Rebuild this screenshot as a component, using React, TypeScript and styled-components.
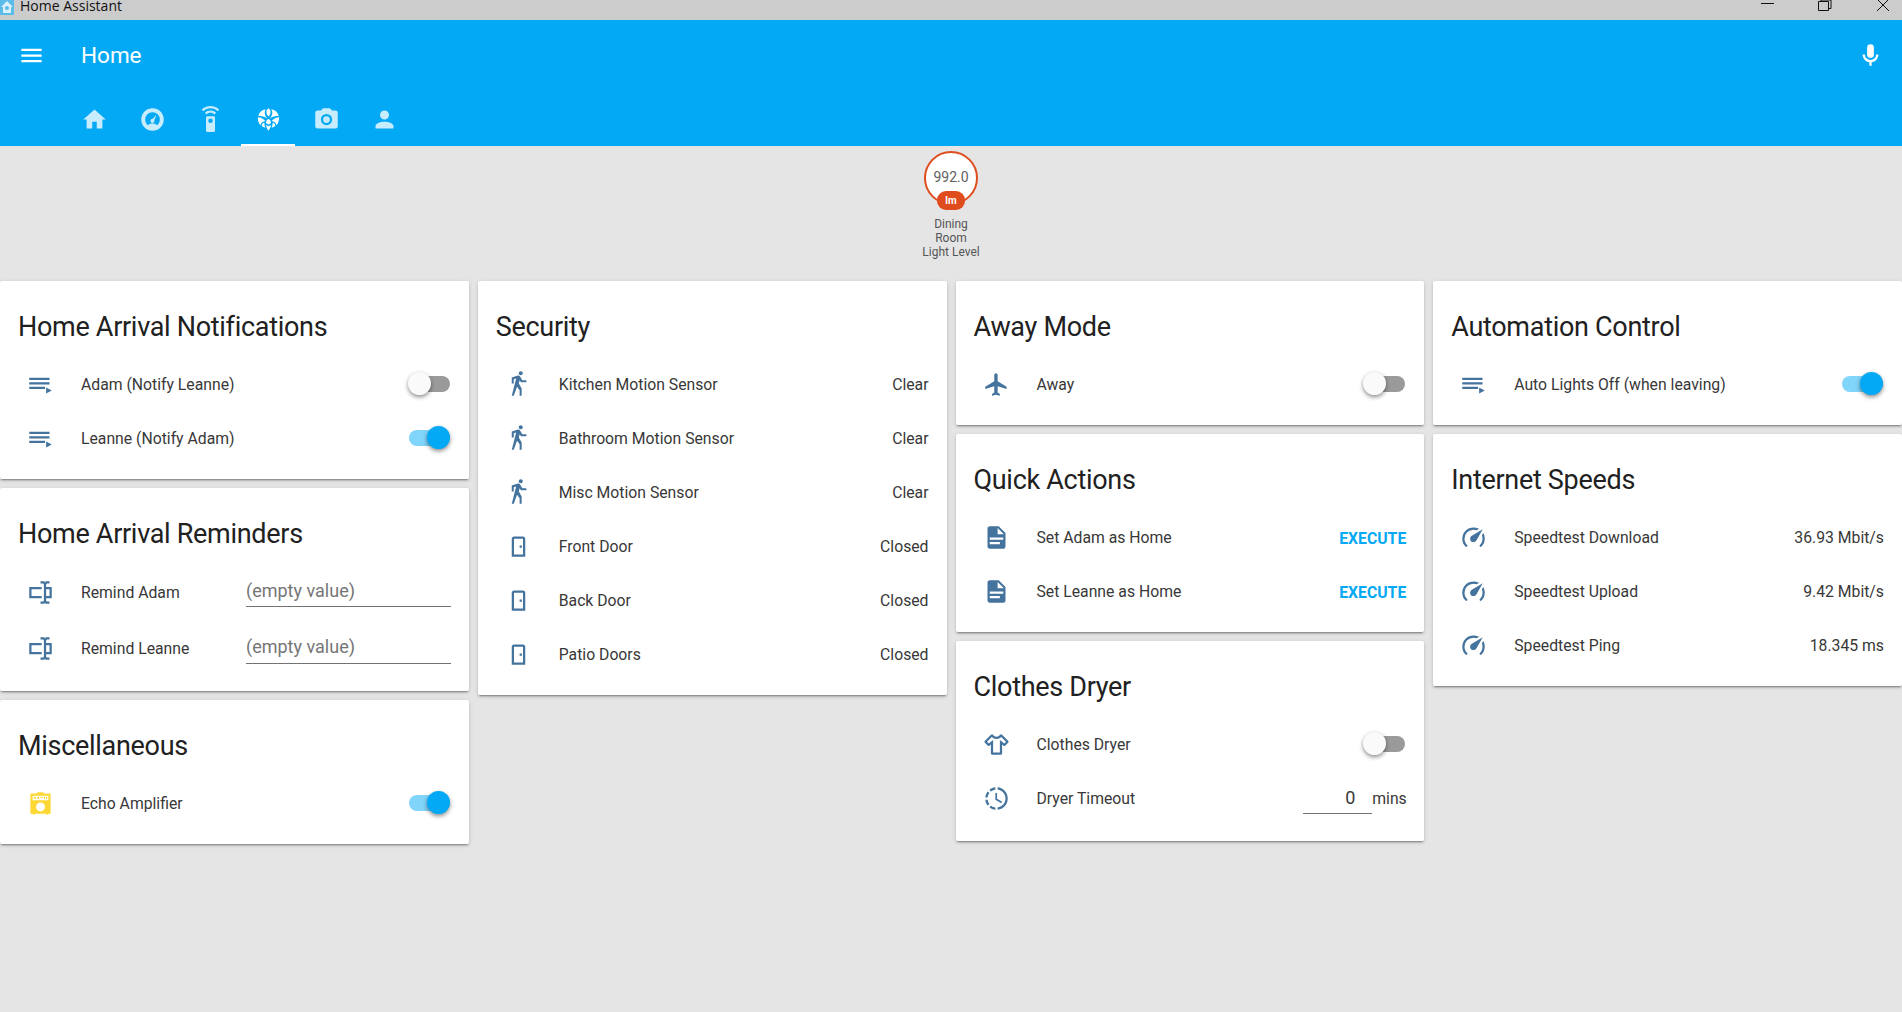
import { ReactNode } from "react";
import styled, { createGlobalStyle } from "styled-components";

const GlobalStyle = createGlobalStyle`
  html, body {
    margin: 0;
    padding: 0;
    height: 100%;
    background-color: #e5e5e5;
    overflow: hidden;
  }
  * {
    box-sizing: border-box;
  }
  input {
    font-family: Roboto, sans-serif;
  }
`;

const icons = {
  menu: "M3,6H21V8H3V6M3,11H21V13H3V11M3,16H21V18H3V16Z",
  mic: "M12,2A3,3 0 0,1 15,5V11A3,3 0 0,1 12,14A3,3 0 0,1 9,11V5A3,3 0 0,1 12,2M19,11C19,14.53 16.39,17.44 13,17.93V21H11V17.93C7.61,17.44 5,14.53 5,11H7A5,5 0 0,0 12,16A5,5 0 0,0 17,11H19Z",
  home: "M10,20V14H14V20H19V12H22L12,3L2,12H5V20H10Z",
  gauge:
    "M12,2A10,10 0 0,1 22,12A10,10 0 0,1 12,22A10,10 0 0,1 2,12A10,10 0 0,1 12,2M12,5.5A6.5,6.5 0 0,0 5.5,12C5.5,14 6.4,15.8 7.8,17C8.8,16 10.3,15.5 12,15.5C13.7,15.5 15.2,16 16.2,17C17.6,15.8 18.5,14 18.5,12A6.5,6.5 0 0,0 12,5.5M15.6,7.8L13.6,12.6C14,13.6 13.4,14.8 12.3,15C11.1,15.2 10.1,14.3 10.2,13.1C10.3,12 11.2,11.3 12.2,11.4L15.6,7.8Z",
  remote:
    "M12,0C8.96,0 6.21,1.23 4.22,3.22L5.63,4.63C7.26,3 9.5,2 12,2C14.5,2 16.74,3 18.36,4.64L19.77,3.23C17.79,1.23 15.04,0 12,0M7.05,6.05L8.46,7.46C9.37,6.56 10.62,6 12,6C13.38,6 14.63,6.56 15.54,7.46L16.95,6.05C15.68,4.78 13.93,4 12,4C10.07,4 8.32,4.78 7.05,6.05M12,15A2,2 0 0,1 10,13A2,2 0 0,1 12,11A2,2 0 0,1 14,13A2,2 0 0,1 12,15M15,9H9A1,1 0 0,0 8,10V22A1,1 0 0,0 9,23H15A1,1 0 0,0 16,22V10A1,1 0 0,0 15,9Z",
  hops:
    "M12,2C10,3.5 9.2,6 12,9.4C14.8,6 14,3.5 12,2M9.5,2.9C6.3,3.4 3.9,5.3 2.9,8.6C5.8,8.6 8.7,9.2 11,11.4C8.4,8.4 7.9,5.4 9.5,2.9M14.5,2.9C16.1,5.4 15.6,8.4 13,11.4C15.3,9.2 18.2,8.6 21.1,8.6C20.1,5.3 17.7,3.4 14.5,2.9M2.6,10C2.4,12.8 3.2,15 4.8,17C5.4,15 7,13.8 9.2,13.4C7.4,11.3 5.2,10.2 2.6,10M21.4,10C18.8,10.2 16.6,11.3 14.8,13.4C17,13.8 18.6,15 19.2,17C20.8,15 21.6,12.8 21.4,10M12,11.4C10.5,12.4 9.8,13.6 9.7,15C10.6,15.4 11.3,15.9 12,16.6C12.7,15.9 13.4,15.4 14.3,15C14.2,13.6 13.5,12.4 12,11.4M8.2,14.6C6.9,15 6.1,16 5.9,17.6C6.8,18.4 7.9,19 9.2,19.4C8.6,17.8 8.3,16.2 8.2,14.6M15.8,14.6C15.7,16.2 15.4,17.8 14.8,19.4C16.1,19 17.2,18.4 18.1,17.6C17.9,16 17.1,15 15.8,14.6M12,18.2C11.2,17.4 10.5,17 9.8,16.9C10,18.6 10.7,20.2 12,22C13.3,20.2 14,18.6 14.2,16.9C13.5,17 12.8,17.4 12,18.2Z",
  camera:
    "M4,4H7L9,2H15L17,4H20A2,2 0 0,1 22,6V18A2,2 0 0,1 20,20H4A2,2 0 0,1 2,18V6A2,2 0 0,1 4,4M12,7A5,5 0 0,0 7,12A5,5 0 0,0 12,17A5,5 0 0,0 17,12A5,5 0 0,0 12,7M12,9A3,3 0 0,1 15,12A3,3 0 0,1 12,15A3,3 0 0,1 9,12A3,3 0 0,1 12,9Z",
  account:
    "M12,4A4,4 0 0,1 16,8A4,4 0 0,1 12,12A4,4 0 0,1 8,8A4,4 0 0,1 12,4M12,14C16.42,14 20,15.79 20,18V20H4V18C4,15.79 7.58,14 12,14Z",
  playlist: "M2,6H20V8H2V6M2,10H20V12H2V10M2,14H16V16H2V14M17,14.6V20L22,17.3L17,14.6Z",
  textbox:
    "M17,7H22V17H17V19A1,1 0 0,0 18,20H20V22H17.5C16.95,22 16,21.55 16,21C16,21.55 15.05,22 14.5,22H12V20H14A1,1 0 0,0 15,19V5A1,1 0 0,0 14,4H12V2H14.5C15.05,2 16,2.45 16,3C16,2.45 16.95,2 17.5,2H20V4H18A1,1 0 0,0 17,5V7M2,7H13V9H4V15H13V17H2V7M20,15V9H17V15H20Z",
  amplifier:
    "M10,2H14A1,1 0 0,1 15,3H21V21H19A1,1 0 0,1 18,22A1,1 0 0,1 17,21H7A1,1 0 0,1 6,22A1,1 0 0,1 5,21H3V3H9A1,1 0 0,1 10,2M5,5V9H19V5H5M7,6A1,1 0 0,1 8,7A1,1 0 0,1 7,8A1,1 0 0,1 6,7A1,1 0 0,1 7,6M12,6H14V7H12V6M15,6H16V8H15V6M17,6H18V8H17V6M12,11A4,4 0 0,0 8,15A4,4 0 0,0 12,19A4,4 0 0,0 16,15A4,4 0 0,0 12,11M10,6A1,1 0 0,1 11,7A1,1 0 0,1 10,8A1,1 0 0,1 9,7A1,1 0 0,1 10,6Z",
  walk: "M14.12,10H19V8.2H15.38L13.38,4.87C13.08,4.37 12.54,4.03 11.92,4.03C11.74,4.03 11.58,4.06 11.42,4.11L6,5.8V11H7.8V7.33L9.91,6.67L6,22H7.8L10.67,13.89L13,17V22H14.8V15.59L12.31,11.05L13.04,8.18M14,3.8C15,3.8 15.8,3 15.8,2C15.8,1 15,0.2 14,0.2C13,0.2 12.2,1 12.2,2C12.2,3 13,3.8 14,3.8Z",
  door: "M8,3C6.89,3 6,3.89 6,5V21H18V5C18,3.89 17.11,3 16,3H8M8,5H16V19H8V5M13,11V13H15V11H13Z",
  airplane:
    "M21,16V14L13,9V3.5A1.5,1.5 0 0,0 11.5,2A1.5,1.5 0 0,0 10,3.5V9L2,14V16L10,13.5V19L8,20.5V22L11.5,21L15,22V20.5L13,19V13.5L21,16Z",
  file: "M13,9H18.5L13,3.5V9M6,2H14L20,8V20A2,2 0 0,1 18,22H6C4.89,22 4,21.1 4,20V4C4,2.89 4.89,2 6,2M15,18V16H6V18H15M18,14V12H6V14H18Z",
  shirt:
    "M16,21H8A1,1 0 0,1 7,20V12.1L5.7,13.1C5.3,13.5 4.7,13.5 4.3,13.1L1.5,10.3C1.1,9.9 1.1,9.3 1.5,8.9L7.3,3H9C9,4.1 10.3,5 12,5C13.7,5 15,4.1 15,3H16.7L22.5,8.9C22.9,9.3 22.9,9.9 22.5,10.3L19.7,13.1C19.3,13.5 18.7,13.5 18.3,13.1L17,12.1V20A1,1 0 0,1 16,21M20.4,9.6L16.2,5.3C15.2,6.3 13.8,7 12,7C10.2,7 8.8,6.3 7.8,5.3L3.6,9.6L5,11L9,8V19H15V8L19,11L20.4,9.6Z",
  clock:
    "M13,2.03V2.05L13,4.05C17.39,4.59 20.5,8.58 19.96,12.97C19.5,16.61 16.64,19.5 13,19.93V21.93C18.5,21.38 22.5,16.5 21.95,11C21.5,6.25 17.73,2.5 13,2.03M11,2.06C9.05,2.25 7.19,3 5.67,4.26L7.1,5.74C8.22,4.84 9.57,4.26 11,4.06V2.06M4.26,5.67C3,7.19 2.25,9.04 2.05,11H4.05C4.24,9.58 4.8,8.23 5.69,7.1L4.26,5.67M2.06,13C2.26,14.96 3.03,16.81 4.27,18.33L5.69,16.9C4.81,15.77 4.24,14.42 4.06,13H2.06M7.1,18.37L5.67,19.74C7.18,21 9.04,21.79 11,22V20C9.58,19.82 8.23,19.25 7.1,18.37M12.5,7V12.25L17,14.92L16.25,16.15L11,13V7H12.5Z",
  speed:
    "M12,16A3,3 0 0,1 9,13C9,11.88 9.61,10.9 10.5,10.39L20.21,4.77L14.68,14.35C14.18,15.33 13.17,16 12,16M12,3C13.81,3 15.5,3.5 16.97,4.32L14.87,5.53C14,5.19 13,5 12,5A8,8 0 0,0 4,13C4,15.21 4.89,17.21 6.34,18.65H6.35C6.74,19.04 6.74,19.67 6.35,20.06C5.96,20.45 5.32,20.45 4.93,20.07V20.07C3.12,18.26 2,15.76 2,13A10,10 0 0,1 12,3M22,13C22,15.76 20.88,18.26 19.07,20.07V20.07C18.68,20.45 18.05,20.45 17.66,20.06C17.27,19.67 17.27,19.04 17.66,18.65V18.65C19.11,17.2 20,15.21 20,13C20,12 19.81,11 19.46,10.1L20.67,8C21.5,9.5 22,11.18 22,13Z",
};

type IconName = keyof typeof icons;

const Svg = styled.svg<{ $color?: string }>`
  width: 27px;
  height: 27px;
  display: block;
  flex: none;
  fill: ${(p) => p.$color || "currentColor"};
`;

const Icon = ({ name, color }: { name: IconName; color?: string }) => (
  <Svg viewBox="0 0 24 24" $color={color}>
    <path d={icons[name]} />
  </Svg>
);

/* window chrome */

const TitleBar = styled.div`
  height: 20px;
  background-color: #cccccc;
  display: flex;
  overflow: hidden;
`;

const AppIcon = styled.svg`
  width: 14px;
  height: 15px;
  flex: none;
`;

const AppName = styled.div`
  flex: 1;
  margin-left: 6px;
  font-family: "Open Sans", sans-serif;
  font-size: 14px;
  line-height: 12px;
  color: #111111;
`;

const WindowButton = styled.svg<{ $gap: number }>`
  width: 14px;
  height: 12px;
  flex: none;
  margin-right: ${(p) => p.$gap}px;
  fill: none;
  stroke: #111111;
  stroke-width: 1;
`;

/* header */

const Header = styled.header`
  background-color: #03a9f4;
  color: #ffffff;
  height: 126px;
  display: flex;
  flex-direction: column;
`;

const Toolbar = styled.div`
  height: 70px;
  display: flex;
  align-items: center;
  padding: 0 18px;
  margin-bottom: 2px;
`;

const Title = styled.div`
  flex: 1;
  margin-left: 36px;
  font-family: Roboto, sans-serif;
  font-size: 22.5px;
  font-weight: 400;
`;

const Tabs = styled.div`
  height: 54px;
  display: flex;
  gap: 4px;
  padding-left: 67px;
`;

const Tab = styled.div<{ $active?: boolean }>`
  width: 54px;
  display: flex;
  align-items: center;
  justify-content: center;
  color: ${(p) => (p.$active ? "#ffffff" : "rgba(255, 255, 255, 0.78)")};
  border-bottom: 2px solid ${(p) => (p.$active ? "#ffffff" : "transparent")};
  padding-top: 2px;
`;

/* badge */

const BadgeRow = styled.div`
  height: 135px;
  padding-top: 5px;
  display: flex;
  justify-content: center;
`;

const Badge = styled.div`
  width: 54px;
  display: flex;
  flex-direction: column;
  align-items: center;
  font-family: Roboto, sans-serif;
`;

const BadgeCircle = styled.div`
  position: relative;
  width: 54px;
  height: 54px;
  flex: none;
  border-radius: 50%;
  border: 2.25px solid #df4c1e;
  background-color: #ffffff;
  display: flex;
  align-items: center;
  justify-content: center;
  padding-bottom: 3px;
  font-size: 14px;
  color: #616161;
`;

const BadgePill = styled.div`
  position: absolute;
  left: 11px;
  top: 38px;
  width: 28px;
  height: 19px;
  border-radius: 9px;
  background-color: #df4c1e;
  color: #ffffff;
  font-size: 10px;
  font-weight: 700;
  line-height: 19px;
  text-align: center;
`;

const BadgeLabel = styled.div`
  width: 60px;
  flex: none;
  margin-top: 12px;
  font-size: 12px;
  line-height: 14px;
  text-align: center;
  color: #555555;
`;

/* cards */

const Columns = styled.main`
  display: grid;
  grid-template-columns: repeat(4, minmax(0, 1fr));
  gap: 9px;
  align-items: start;
`;

const Column = styled.div`
  display: flex;
  flex-direction: column;
  gap: 9px;
`;

const CardBox = styled.section<{ $bottom?: number }>`
  background-color: #ffffff;
  border-radius: 2px;
  box-shadow: 0 2px 2px 0 rgba(0, 0, 0, 0.14), 0 1px 5px 0 rgba(0, 0, 0, 0.12),
    0 3px 1px -2px rgba(0, 0, 0, 0.2);
  padding: 0 18px ${(p) => p.$bottom ?? 14}px;
  font-family: Roboto, sans-serif;
`;

const CardTitle = styled.h2`
  margin: 0;
  padding: 28px 0 8px;
  font-size: 27px;
  line-height: 36px;
  font-weight: 400;
  letter-spacing: -0.3px;
  color: #212121;
`;

const CardBody = styled.div`
  padding-top: 4px;
`;

const Row = styled.div<{ $tall?: boolean }>`
  height: ${(p) => (p.$tall ? 56.5 : 54)}px;
  display: flex;
  align-items: center;
  font-size: 15.75px;
  color: #383838;
`;

const IconCell = styled.div`
  width: 45px;
  flex: none;
  margin-right: 18px;
  display: flex;
  justify-content: center;
`;

const Name = styled.div<{ $fixed?: boolean }>`
  flex: ${(p) => (p.$fixed ? "none" : "1")};
  width: ${(p) => (p.$fixed ? "165px" : "auto")};
  white-space: nowrap;
`;

const Value = styled.div`
  white-space: nowrap;
`;

const ActionButton = styled.div`
  font-weight: 700;
  font-size: 15.75px;
  color: #03a9f4;
  padding-top: 2px;
`;

const SwitchTrack = styled.div<{ $on?: boolean }>`
  position: relative;
  width: 41px;
  height: 16px;
  margin-right: 1px;
  border-radius: 8px;
  background-color: ${(p) => (p.$on ? "#81d4fa" : "#9a9a9a")};
`;

const SwitchThumb = styled.div<{ $on?: boolean }>`
  position: absolute;
  top: -4px;
  ${(p) => (p.$on ? "right: 0;" : "left: -1px;")}
  width: 23px;
  height: 23px;
  border-radius: 50%;
  background-color: ${(p) => (p.$on ? "#03a9f4" : "#fafafa")};
  box-shadow: 0 2px 4px rgba(0, 0, 0, 0.45);
`;

const Switch = ({ on }: { on?: boolean }) => (
  <SwitchTrack $on={on}>
    <SwitchThumb $on={on} />
  </SwitchTrack>
);

const TextField = styled.input`
  flex: 1;
  min-width: 0;
  height: 29px;
  margin-top: 1px;
  padding: 0 0 4px;
  border: none;
  border-bottom: 1.5px solid #737373;
  outline: none;
  background: transparent;
  font-size: 18px;
  color: #383838;

  &::placeholder {
    color: #757575;
    opacity: 1;
  }
`;

const NumberField = styled(TextField)`
  flex: none;
  width: 69px;
  margin-top: 2px;
  padding-right: 17px;
  padding-bottom: 3px;
  text-align: right;
  border-bottom-width: 1px;
`;

const Unit = styled.div`
  width: 34px;
  text-align: right;
`;

const Card = ({ title, bottom, children }: { title: string; bottom?: number; children: ReactNode }) => (
  <CardBox $bottom={bottom}>
    <CardTitle>{title}</CardTitle>
    <CardBody>{children}</CardBody>
  </CardBox>
);

const Entity = ({
  icon,
  color,
  name,
  children,
}: {
  icon: IconName;
  color?: string;
  name: string;
  children?: ReactNode;
}) => (
  <Row>
    <IconCell>
      <Icon name={icon} color={color || "#44739e"} />
    </IconCell>
    <Name>{name}</Name>
    {children}
  </Row>
);

const InputEntity = ({ name }: { name: string }) => (
  <Row $tall>
    <IconCell>
      <Icon name="textbox" color="#44739e" />
    </IconCell>
    <Name $fixed>{name}</Name>
    <TextField placeholder="(empty value)" readOnly />
  </Row>
);

const tabs: IconName[] = ["home", "gauge", "remote", "hops", "camera", "account"];

const security = [
  { icon: "walk", name: "Kitchen Motion Sensor", state: "Clear" },
  { icon: "walk", name: "Bathroom Motion Sensor", state: "Clear" },
  { icon: "walk", name: "Misc Motion Sensor", state: "Clear" },
  { icon: "door", name: "Front Door", state: "Closed" },
  { icon: "door", name: "Back Door", state: "Closed" },
  { icon: "door", name: "Patio Doors", state: "Closed" },
] as const;

const speeds = [
  { name: "Speedtest Download", state: "36.93 Mbit/s" },
  { name: "Speedtest Upload", state: "9.42 Mbit/s" },
  { name: "Speedtest Ping", state: "18.345 ms" },
];

const App = () => {
  return (
    <>
      <GlobalStyle />
      <TitleBar>
        <AppIcon viewBox="0 0 14 15">
          <rect width="14" height="15" fill="#5bbcea" />
          <path d="M7 1L1 7h2v6h8V7h2z" fill="#d8f1fc" />
          <circle cx="7" cy="8" r="2" fill="#5bbcea" />
        </AppIcon>
        <AppName>Home Assistant</AppName>
        <WindowButton viewBox="0 0 14 12" $gap={43}>
          <path d="M0 3.5H13" />
        </WindowButton>
        <WindowButton viewBox="0 0 14 12" $gap={44}>
          <path d="M0.5 1.5H10.5V10.5H0.5ZM3 1.5V0H13V8.5H10.5" />
        </WindowButton>
        <WindowButton viewBox="0 0 14 12" $gap={12}>
          <path d="M1 -1L13 11M13 -1L1 11" />
        </WindowButton>
      </TitleBar>
      <Header>
        <Toolbar>
          <Icon name="menu" />
          <Title>Home</Title>
          <Icon name="mic" />
        </Toolbar>
        <Tabs>
          {tabs.map((name) => (
            <Tab key={name} $active={name === "hops"}>
              <Icon name={name} />
            </Tab>
          ))}
        </Tabs>
      </Header>
      <BadgeRow>
        <Badge>
          <BadgeCircle>
            992.0
            <BadgePill>lm</BadgePill>
          </BadgeCircle>
          <BadgeLabel>Dining Room Light Level</BadgeLabel>
        </Badge>
      </BadgeRow>
      <Columns>
        <Column>
          <Card title="Home Arrival Notifications">
            <Entity icon="playlist" name="Adam (Notify Leanne)">
              <Switch />
            </Entity>
            <Entity icon="playlist" name="Leanne (Notify Adam)">
              <Switch on />
            </Entity>
          </Card>
          <Card title="Home Arrival Reminders">
            <InputEntity name="Remind Adam" />
            <InputEntity name="Remind Leanne" />
          </Card>
          <Card title="Miscellaneous">
            <Entity icon="amplifier" color="#fdd835" name="Echo Amplifier">
              <Switch on />
            </Entity>
          </Card>
        </Column>
        <Column>
          <Card title="Security">
            {security.map((item) => (
              <Entity key={item.name} icon={item.icon} name={item.name}>
                <Value>{item.state}</Value>
              </Entity>
            ))}
          </Card>
        </Column>
        <Column>
          <Card title="Away Mode">
            <Entity icon="airplane" name="Away">
              <Switch />
            </Entity>
          </Card>
          <Card title="Quick Actions">
            <Entity icon="file" name="Set Adam as Home">
              <ActionButton>EXECUTE</ActionButton>
            </Entity>
            <Entity icon="file" name="Set Leanne as Home">
              <ActionButton>EXECUTE</ActionButton>
            </Entity>
          </Card>
          <Card title="Clothes Dryer" bottom={16}>
            <Entity icon="shirt" name="Clothes Dryer">
              <Switch />
            </Entity>
            <Entity icon="clock" name="Dryer Timeout">
              <NumberField value="0" readOnly />
              <Unit>mins</Unit>
            </Entity>
          </Card>
        </Column>
        <Column>
          <Card title="Automation Control">
            <Entity icon="playlist" name="Auto Lights Off (when leaving)">
              <Switch on />
            </Entity>
          </Card>
          <Card title="Internet Speeds">
            {speeds.map((item) => (
              <Entity key={item.name} icon="speed" name={item.name}>
                <Value>{item.state}</Value>
              </Entity>
            ))}
          </Card>
        </Column>
      </Columns>
    </>
  );
};

export default App;
